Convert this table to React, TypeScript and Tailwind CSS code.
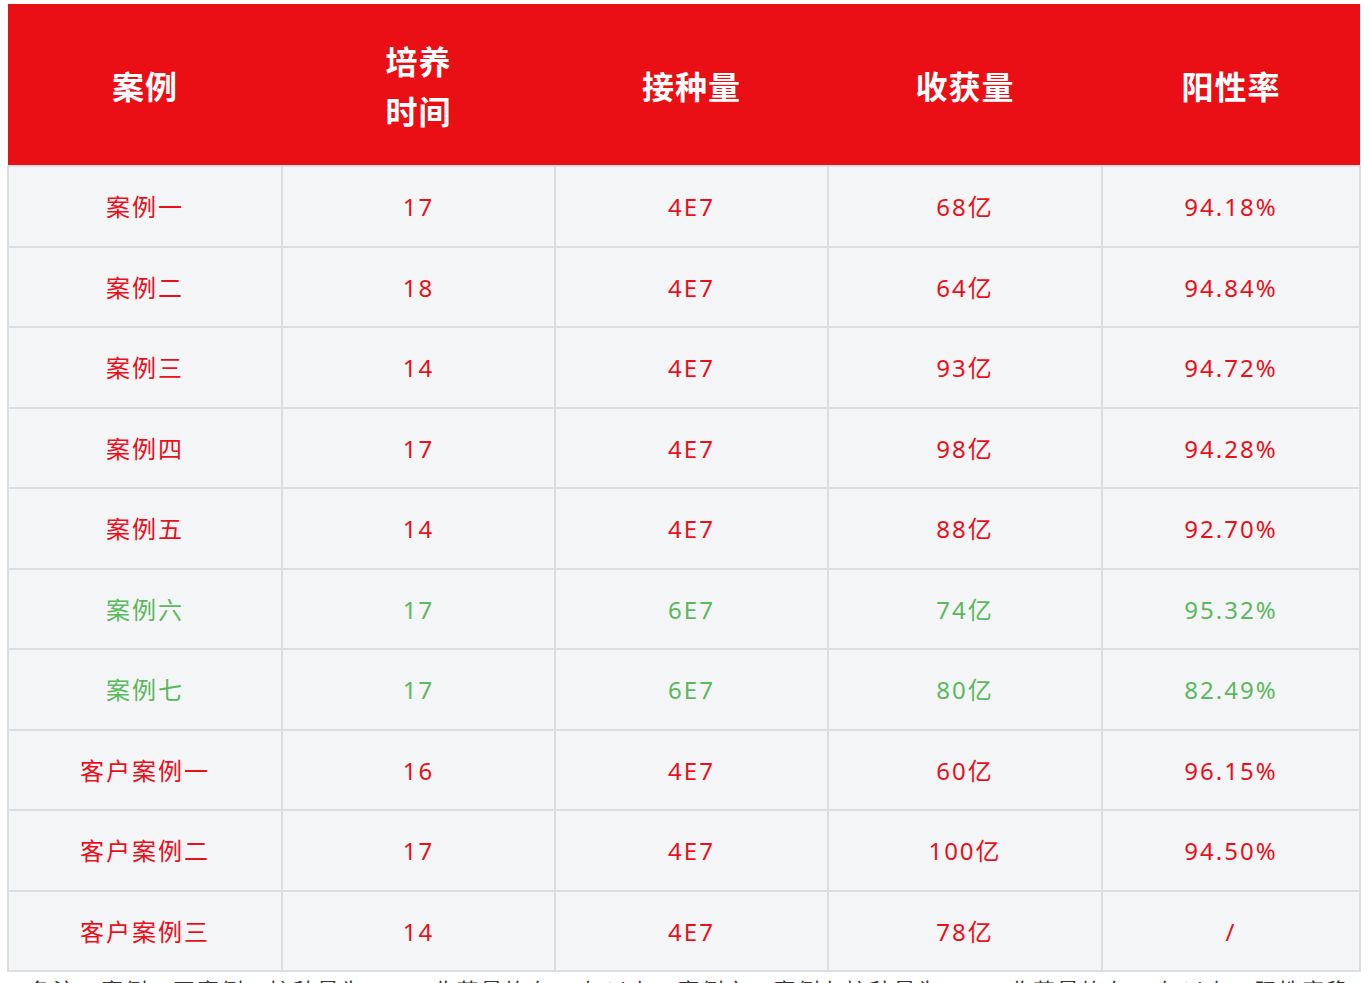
import React from "react";

type Row = {
  name: string;
  days: string;
  dose: string;
  yieldAmt: string;
  rate: string;
  green?: boolean;
};

const rows: Row[] = [
  { name: "案例一", days: "17", dose: "4E7", yieldAmt: "68亿", rate: "94.18%" },
  { name: "案例二", days: "18", dose: "4E7", yieldAmt: "64亿", rate: "94.84%" },
  { name: "案例三", days: "14", dose: "4E7", yieldAmt: "93亿", rate: "94.72%" },
  { name: "案例四", days: "17", dose: "4E7", yieldAmt: "98亿", rate: "94.28%" },
  { name: "案例五", days: "14", dose: "4E7", yieldAmt: "88亿", rate: "92.70%" },
  { name: "案例六", days: "17", dose: "6E7", yieldAmt: "74亿", rate: "95.32%", green: true },
  { name: "案例七", days: "17", dose: "6E7", yieldAmt: "80亿", rate: "82.49%", green: true },
  { name: "客户案例一", days: "16", dose: "4E7", yieldAmt: "60亿", rate: "96.15%" },
  { name: "客户案例二", days: "17", dose: "4E7", yieldAmt: "100亿", rate: "94.50%" },
  { name: "客户案例三", days: "14", dose: "4E7", yieldAmt: "78亿", rate: "/" },
];

const font = "font-['Noto_Sans','Noto_Sans_CJK_SC',sans-serif]";

export default function App() {
  return (
    <div className={`min-h-screen bg-white pt-[4px] pl-[7px] ${font}`}>
      <table className="w-[1352px] table-fixed border-collapse">
        <colgroup>
          <col className="w-[274px]" />
          <col className="w-[273px]" />
          <col className="w-[273px]" />
          <col className="w-[274px]" />
          <col className="w-[258px]" />
        </colgroup>
        <thead>
          <tr className="h-[162px] bg-[#ea0f15] text-[32px] font-bold leading-[50px] tracking-[1px] text-white">
            <th className="pt-[4px] text-center">案例</th>
            <th className="pt-[4px] text-center">
              培养
              <br />
              时间
            </th>
            <th className="pt-[4px] text-center">接种量</th>
            <th className="pt-[4px] text-center">收获量</th>
            <th className="pt-[4px] text-center">阳性率</th>
          </tr>
        </thead>
        <tbody>
          {rows.map((r) => {
            // green rows are the 6E7 inoculation cases
            const color = r.green ? "text-[#5cb85c]" : "text-[#e8101a]";
            const cell = `h-[80.5px] border-2 border-[#dcdde0] bg-[#f4f5f7] pt-[2px] text-center text-[24px] tracking-[2px] ${color}`;
            return (
              <tr key={r.name}>
                <td className={cell}>{r.name}</td>
                <td className={cell}>{r.days}</td>
                <td className={cell}>{r.dose}</td>
                <td className={cell}>{r.yieldAmt}</td>
                <td className={cell}>{r.rate}</td>
              </tr>
            );
          })}
        </tbody>
      </table>
      <p className="mt-[4px] pl-[22px] text-[22px] leading-[28px] tracking-[2px] text-[#333]">
        备注：案例一至案例五接种量为4E7，收获量均在60亿以上；案例六、案例七接种量为6E7，收获量均在70亿以上，阳性率稳定。
      </p>
    </div>
  );
}
